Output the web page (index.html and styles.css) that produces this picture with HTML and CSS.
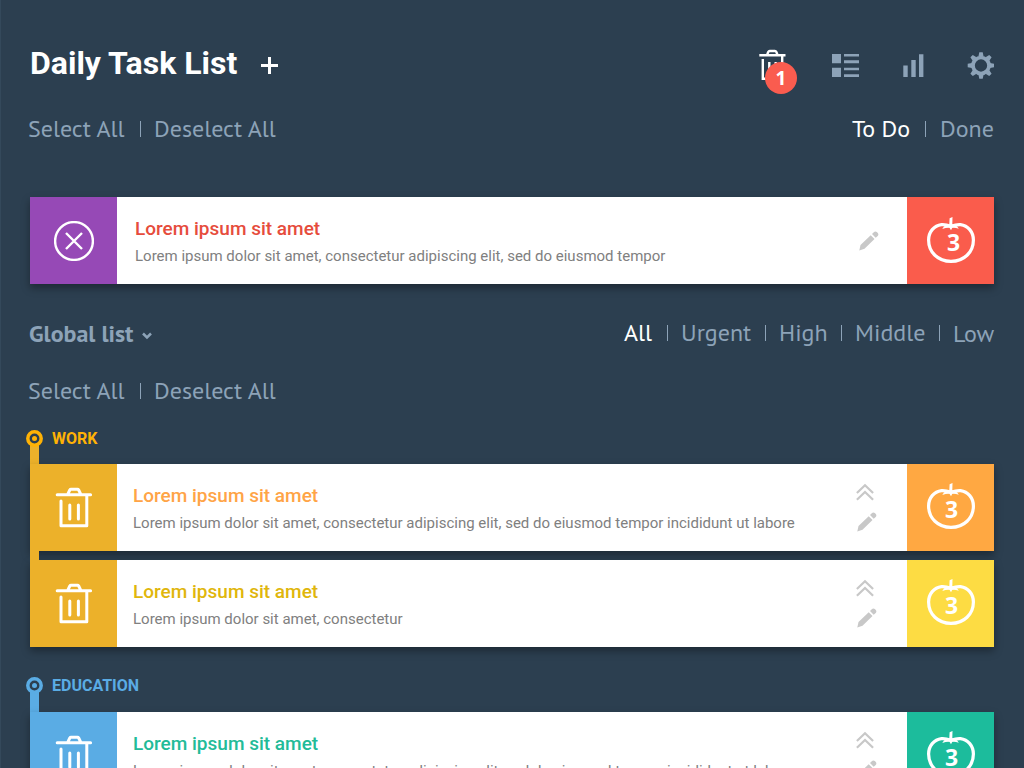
FILE: index.html
```html
<!DOCTYPE html>
<html lang="en">
<head>
<meta charset="utf-8">
<title>Daily Task List</title>
<link rel="stylesheet" href="styles.css">
</head>
<body>
<svg class="symbols" width="0" height="0">
  <symbol id="trash" viewBox="0 0 87 87">
    <g fill="none" stroke="currentColor" stroke-width="3" stroke-linecap="round" stroke-linejoin="round">
      <path d="M27.2 30.700H60.600M37.800 30.200l2-4.200q.4-.7 1.200-.7h6.500q.8 0 1.200.7l2 4.200M31 36.900V61.700H56.800V31M39.800 40.900V54.900M48.400 40.900V54.900"/>
    </g>
  </symbol>
  <symbol id="tomato" viewBox="0 0 87 87">
    <path d="M44 28.300C40 26.800 37 26.400 34.500 26.600C27 27.500 21.600 34 21.600 42C21.600 54.200 31 63.400 44 63.400S66.400 54.200 66.400 42C66.400 34 61 27.500 53.500 26.600C51 26.400 48 26.800 44 28.300Z" fill="none" stroke="currentColor" stroke-width="3.200"/>
    <path d="M42.600 20.300l2.900-1.200-.2 7.200q3.700.2 6.500 4.500-4-1.500-6.500-1l-1.300 2.400-1.500-2.400q-3-.3-7.200 1.300 2.400-4.500 7-4.800z" fill="currentColor"/>
  </symbol>
  <symbol id="pencil" viewBox="0 0 20 20">
    <path d="M.3 19.500L1.500 14 11.700 4.200 15.500 8 5.500 17.800ZM13 3L14.800 1.200Q16.200-.2 17.800 1L18.800 2Q20 3.500 18.700 4.900L16.700 6.800Z" fill="currentColor"/>
  </symbol>
  <symbol id="chevrons" viewBox="0 0 18 18">
    <path d="M.9 10L9 2.200 17.100 10M.9 16.800L9 9 17.100 16.800" fill="none" stroke="currentColor" stroke-width="2.200"/>
  </symbol>
</svg>

<main class="page">
  <header class="top">
    <h1 class="title">Daily Task List</h1>
    <svg class="plus" viewBox="0 0 17 17"><path d="M0 8.500H17M8.500 0V17" stroke="currentColor" stroke-width="3"/></svg>
    <div class="tools">
      <div class="bin">
        <svg class="bin-icon" viewBox="0 0 28 32"><path d="M.3 6.200H26.500M8.200 5.700l1-2.700q.5-1 1.500-1h5.200q1 0 1.500 1l1 2.700M3.800 10V29.800H23.200V6.500M10.300 13v11M16.700 13v11" fill="none" stroke="currentColor" stroke-width="2.400"/></svg>
        <span class="badge">1</span>
      </div>
      <svg class="list-icon" viewBox="0 0 27 23"><path d="M0 0h9v9.300H0zM0 13.700h9V23H0zM12 0h15v2.600H12zM12 6.300h15v2.900H12zM12 13.700h15v2.600H12zM12 20.200h15V23H12z" fill="currentColor"/></svg>
      <svg class="bars-icon" viewBox="0 0 21 23"><path d="M.3 11.500h4.400V23H.3zM8.300 6h4.400v17H8.300zM16 .3h4.400V23H16z" fill="currentColor"/></svg>
      <svg class="gear-icon" viewBox="-14 -13.500 27 27">
        <circle r="8" fill="none" stroke="currentColor" stroke-width="3.700"/>
        <path id="tooth" d="M-2.600-9L-1.700-13.300H1.700L2.600-9ZM-2.600 9L-1.700 13.300H1.700L2.600 9ZM-9-2.600L-13.300-1.700V1.700L-9 2.600ZM9-2.600L13.300-1.700V1.700L9 2.600Z" fill="currentColor"/>
        <use href="#tooth" transform="rotate(45)"/>
      </svg>
    </div>
  </header>

  <nav class="links">
    <a class="link select">Select All</a><a class="link deselect">Deselect All</a>
    <div class="filters"><a class="link active todo">To Do</a><a class="link done">Done</a></div>
  </nav>

  <article class="card lead">
    <div class="cell purple"><svg class="cross" viewBox="0 0 40 40"><circle cx="20" cy="20" r="18.900"/><path d="M12 12L28 28M28 12L12 28"/></svg></div>
    <div class="text"><h2 class="name red">Lorem ipsum sit amet</h2><p class="desc">Lorem ipsum dolor sit amet, consectetur adipiscing elit, sed do eiusmod tempor</p></div>
    <div class="actions"><svg class="pencil"><use href="#pencil"/></svg></div>
    <div class="cell count coral"><svg class="full"><use href="#tomato"/></svg><span class="num">3</span></div>
  </article>

  <nav class="links global">
    <h2 class="list-name">Global list</h2>
    <svg class="caret" viewBox="0 0 10 8"><path d="M1 1.500L5 5.500 9 1.500" fill="none" stroke="currentColor" stroke-width="2.500"/></svg>
    <div class="filters"><a class="link active all">All</a><a class="link urgent">Urgent</a><a class="link high">High</a><a class="link middle">Middle</a><a class="link low">Low</a></div>
  </nav>
  <nav class="links second"><a class="link select">Select All</a><a class="link deselect">Deselect All</a></nav>

  <section class="group work">
    <h3 class="label"><svg class="node" viewBox="0 0 17 17"><circle cx="8.500" cy="8.500" r="6.700"/><circle class="dot" cx="8.500" cy="8.500" r="2.500"/></svg>WORK</h3>
    <article class="card">
      <div class="cell amber"><svg class="full"><use href="#trash"/></svg></div>
      <div class="text"><h2 class="name orange-text">Lorem ipsum sit amet</h2><p class="desc">Lorem ipsum dolor sit amet, consectetur adipiscing elit, sed do eiusmod tempor incididunt ut labore</p></div>
      <div class="actions"><svg class="chevrons"><use href="#chevrons"/></svg><svg class="pencil"><use href="#pencil"/></svg></div>
      <div class="cell count orange"><svg class="full"><use href="#tomato"/></svg><span class="num">3</span></div>
    </article>
    <div class="joint"></div>
    <article class="card">
      <div class="cell amber"><svg class="full"><use href="#trash"/></svg></div>
      <div class="text"><h2 class="name yellow-text">Lorem ipsum sit amet</h2><p class="desc">Lorem ipsum dolor sit amet, consectetur</p></div>
      <div class="actions"><svg class="chevrons"><use href="#chevrons"/></svg><svg class="pencil"><use href="#pencil"/></svg></div>
      <div class="cell count yellow"><svg class="full"><use href="#tomato"/></svg><span class="num">3</span></div>
    </article>
  </section>

  <section class="group education">
    <h3 class="label"><svg class="node" viewBox="0 0 17 17"><circle cx="8.500" cy="8.500" r="6.700"/><circle class="dot" cx="8.500" cy="8.500" r="2.500"/></svg>EDUCATION</h3>
    <article class="card">
      <div class="cell blue"><svg class="full"><use href="#trash"/></svg></div>
      <div class="text"><h2 class="name green-text">Lorem ipsum sit amet</h2><p class="desc">Lorem ipsum dolor sit amet, consectetur adipiscing elit, sed do eiusmod tempor incididunt ut labore</p></div>
      <div class="actions"><svg class="chevrons"><use href="#chevrons"/></svg><svg class="pencil"><use href="#pencil"/></svg></div>
      <div class="cell count green"><svg class="full"><use href="#tomato"/></svg><span class="num">3</span></div>
    </article>
  </section>
</main>
</body>
</html>
```

FILE: styles.css
```css
* { box-sizing: border-box; margin: 0; padding: 0; }
body { background: #2c3f50; font-family: Roboto, "Liberation Sans", sans-serif; overflow: hidden; }
svg { display: block; flex: none; }
.symbols { position: absolute; }
.page { height: 768px; overflow: hidden; padding: 40px 30px 0; border-left: 1px solid #34495b; padding-left: 29px; }

.top { display: flex; align-items: center; height: 50px; color: #fff; }
.title { font-size: 32px; line-height: 46px; font-weight: 700; width: 231px; margin-top: -4px; white-space: nowrap; }
.plus { width: 17px; height: 17px; margin-top: 1px; }
.tools { display: flex; align-items: center; margin-left: auto; color: #8da3b8; }
.bin { position: relative; width: 28px; height: 32px; color: #fff; margin-right: 45px; }
.bin-icon { width: 28px; height: 32px; }
.badge { position: absolute; left: 6px; top: 13px; width: 32px; height: 32px; border-radius: 50%; background: #fa5c4f; font: 700 19px/32px "Noto Sans", sans-serif; text-align: center; }
.list-icon { width: 27px; height: 23px; margin-right: 44px; }
.bars-icon { width: 21px; height: 23px; margin-right: 43px; }
.gear-icon { width: 27px; height: 27px; }

.links { display: flex; height: 32px; margin-top: 23px; font: 400 24px/32px "PT Sans", "Noto Sans", sans-serif; color: #8da3b8; }
.link { white-space: nowrap; }
.link + .link { background: linear-gradient(currentColor, currentColor) 0 8px / 1px 16px no-repeat; padding-left: 14px; }
.active { color: #fff; }
.active + .link { color: #8da3b8; }
.filters { display: flex; margin-left: auto; }
.select { width: 112px; margin-left: -2px; }
.todo { width: 73px; }
.done { width: 69px; }
.filters .link.done { padding-left: 15px; }
.all { width: 43px; }
.urgent { width: 98px; }
.high { width: 76px; }
.middle { width: 98px; }
.low { width: 55px; }

.card { display: flex; height: 87px; background: #fff; box-shadow: 0 4px 8px rgba(0, 0, 0, .35); }
.lead { margin-top: 52px; }
.cell { position: relative; width: 87px; flex: none; display: grid; place-items: center; color: #fff; }
.full { width: 87px; height: 87px; }
.cross { width: 40px; height: 40px; fill: none; stroke: #fff; stroke-width: 2.400; }
.text { flex: 1; padding: 20px 0 0 16px; }
.name { font-size: 19px; line-height: 24px; font-weight: 500; }
.desc { font-size: 15px; line-height: 24px; margin-top: 3px; color: #808080; white-space: nowrap; }
.lead .text { padding-left: 18px; }
.actions { width: 52px; color: #c8c8c8; padding-top: 19px; display: flex; flex-direction: column; gap: 11px; }
.chevrons { width: 18px; height: 18px; margin-left: 1px; }
.pencil { width: 20px; height: 20px; margin-left: 2px; }
.lead .actions { padding-top: 34px; }
.lead .pencil { margin-left: 4px; }
.num { position: absolute; left: 38px; top: 29px; font: 700 23px/33px "Open Sans", "Noto Sans", sans-serif; }
.lead .num { left: 40px; }
.lead .full { margin-top: 1px; }
.purple { background: #9649b6; }
.coral { background: #fa5c4c; }
.amber { background: #ecb12a; }
.orange { background: #ffa842; }
.yellow { background: #fddc43; }
.blue { background: #5aace4; }
.green { background: #1cbc9c; }
.red { color: #e64c3c; }
.orange-text { color: #ffa446; }
.yellow-text { color: #e0b60c; }
.green-text { color: #22bb98; }

.global { margin-top: 33px; }
.list-name { font-size: 24px; line-height: 34px; font-weight: 700; width: 113px; margin-left: -1px; white-space: nowrap; }
.caret { width: 10px; height: 8px; margin-top: 15px; }
.low { line-height: 34px; }
.second { margin-top: 26px; }

.label { display: flex; align-items: center; height: 57px; padding-top: 5px; margin-left: -4px; gap: 9px; font-size: 16px; font-weight: 700; background: linear-gradient(currentColor, currentColor) 4px 100% / 9px 21px no-repeat; }
.node { width: 17px; height: 17px; fill: #2c3f50; stroke: currentColor; stroke-width: 3.500; }
.dot { fill: currentColor; stroke: none; }
.work .label { color: #ffb205; background-image: linear-gradient(#ecb12a, #ecb12a); }
.joint { position: relative; width: 9px; height: 9px; background: #ecb12a; }
.education .label { color: #5aace4; height: 65px; padding: 12px 0 0; }
```
